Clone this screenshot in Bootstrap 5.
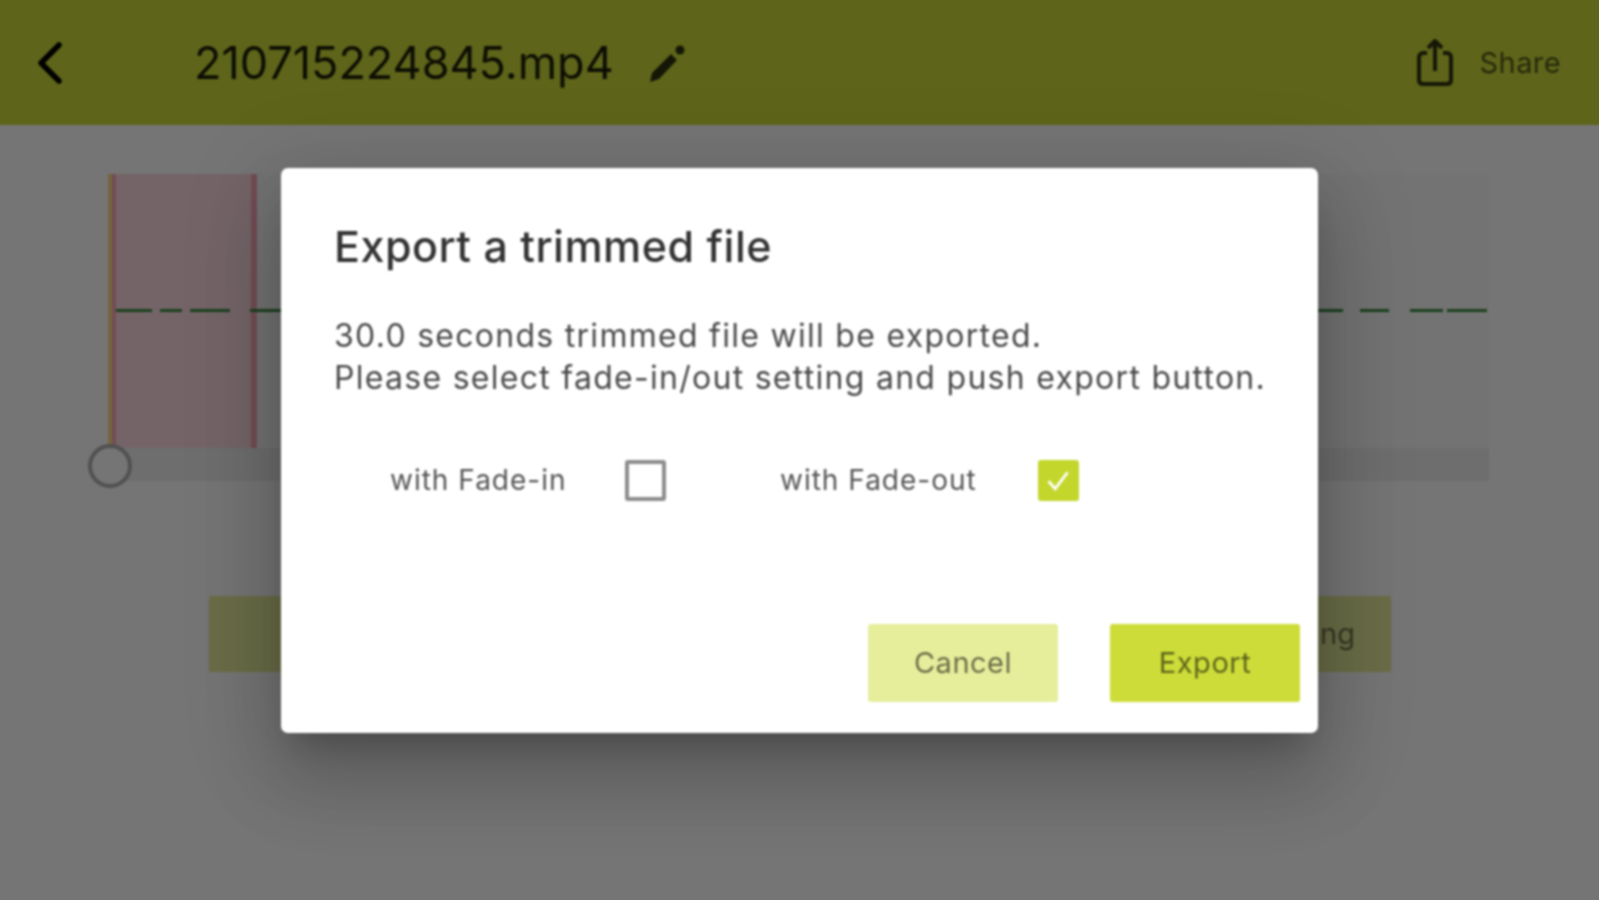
<!DOCTYPE html>
<html lang="en">
<head>
<meta charset="utf-8">
<title>Export a trimmed file</title>
<link href="https://cdn.jsdelivr.net/npm/bootstrap@5.3.0/dist/css/bootstrap.min.css" rel="stylesheet">
<style>
html{background:linear-gradient(#5e651a 0 125px,#757575 125px)}
body{background:#fff;font-family:Inter,"Liberation Sans",sans-serif;height:900px;overflow:hidden;filter:blur(1px)}
.app-bar{background:#cddc39;height:125px;padding:0}
.app-back{margin-left:38px;width:24px;height:42px}
.app-title{margin:0 0 0 132px;font-size:45px;font-weight:400;color:rgba(0,0,0,.87);line-height:1;letter-spacing:0}
.app-pencil{margin-left:33px;width:42px;height:42px}
.app-share{color:rgba(0,0,0,.6);font-size:29px;letter-spacing:.4px;margin-right:38px;gap:26px}
.trim-box{margin:49px 110px 0 109px;position:relative}
.wave-area{height:274px;background:repeating-linear-gradient(90deg,#fafafa 0 60px,#f8f8f8 60px 61px);position:relative}
.wave-line{position:absolute;left:0;top:135px;width:100%;height:3px;display:block;z-index:1}
.trim-range{position:absolute;left:0;top:0;width:148px;height:274px;background:#fcd9e2;border-right:6px solid #f9a8b8;border-left:7px solid #f9a8b8}
.trim-start{position:absolute;left:-1px;top:0;width:4px;height:274px;background:#ffdd88}
.seek-strip{height:33px;background:#f0f0f0}
.seek-knob{position:absolute;left:-21px;top:270px;width:44px;height:44px;border:4px solid #b0b0b0;border-radius:50%;background:#fff}
.back-actions{margin:115px 208px 0 209px}
.back-btn{width:500px;height:76px;background:#e6ee9c;border:0;border-radius:2px;font-size:29px;color:rgba(0,0,0,.5);text-align:right;padding-right:36px}
.modal-backdrop.show{opacity:.54;background:#000}
.export-dialog{max-width:1037px;margin:168px auto 0}
.export-dialog .modal-content{height:565px;border:0;border-radius:7px;box-shadow:0 48px 76px 6px rgba(0,0,0,.14),0 18px 92px 16px rgba(0,0,0,.12),0 22px 30px -14px rgba(0,0,0,.2)}
.export-head{padding:55px 0 0 53px;border:0;display:block}
.export-head h2{font-size:43px;font-weight:500;letter-spacing:.5px;line-height:46px;margin:0;color:#333}
.export-text{margin:46px 0 0 53px;font-size:32px;letter-spacing:1.28px;line-height:42px;color:#4a4a4a;white-space:nowrap}
.fade-row{margin:60px 0 0 109px;font-size:28px;letter-spacing:1px;color:#555;height:42px}
.fade-row label{white-space:nowrap}
.label-in{width:175px}
.label-out{width:198px}
.fade-row .form-check-input{width:41px;height:41px;margin:0 0 0 60px;border:4px solid #8c8c8c;border-radius:3px;flex:none}
.fade-row .form-check-input:checked{background-color:#c3d62c;border-color:#c3d62c;background-size:100%;background-image:url("data:image/svg+xml,%3csvg xmlns='http://www.w3.org/2000/svg' viewBox='0 0 40 40'%3e%3cpath fill='none' stroke='%23fff' stroke-width='3.5' d='M8 21l8 9L31 10'/%3e%3c/svg%3e")}
.fade-gap{width:114px}
.export-foot{position:absolute;right:18px;bottom:31px;gap:52px;padding:0;border:0}
.export-foot .btn{width:190px;height:78px;margin:0;border:0;border-radius:3px;font-size:29px;letter-spacing:.5px;color:rgba(0,0,0,.55)}
.btn-cancel{background:#e6ee9c}
.btn-export{background:#cddc39}
</style>
</head>
<body>
<nav class="navbar app-bar d-flex flex-nowrap align-items-center justify-content-start">
  <svg class="app-back flex-none" viewBox="0 0 24 42"><path d="M21 3 3 21l18 18" fill="none" stroke="#000" stroke-width="5.5" stroke-linecap="round" stroke-linejoin="round"/></svg>
  <h1 class="app-title">210715224845.mp4</h1>
  <svg class="app-pencil" viewBox="0 0 42 42" fill="#2e330e"><path d="M3 40l2-9L24 12l6 6L12 37z"/><circle cx="33" cy="8" r="4.5"/></svg>
  <div class="app-share d-flex align-items-center ms-auto">
    <svg width="38" height="48" viewBox="0 0 38 48" fill="none" stroke="#2f330f" stroke-width="4"><path d="M11 14H7c-2 0-4 2-4 4v23c0 3 2 4 4 4h24c3 0 4-2 4-4V18c0-2-2-4-4-4h-4"/><path d="M19 32V4"/><path d="M12 9l7-7 7 7" stroke-linejoin="round"/></svg>
    <span>Share</span>
  </div>
</nav>
<main>
  <div class="trim-box">
    <div class="wave-area">
      <svg class="wave-line" viewBox="0 0 1380 3" preserveAspectRatio="none"><path stroke="#3c8c40" stroke-width="3" d="M7 1.5h36M51 1.5h22M81 1.5h40M141 1.5h40M1209 1.5h25M1251 1.5h29M1301 1.5h33M1338 1.5h40"/></svg>
      <div class="trim-range"></div>
      <div class="trim-start"></div>
    </div>
    <div class="seek-strip"></div>
    <div class="seek-knob"></div>
  </div>
  <div class="back-actions d-flex justify-content-between">
    <button class="back-btn" type="button">Cancel</button>
    <button class="back-btn" type="button">Start trimming</button>
  </div>
</main>
<div class="modal-backdrop show"></div>
<div class="modal d-block" tabindex="-1">
  <div class="modal-dialog export-dialog">
    <div class="modal-content">
      <div class="modal-header export-head"><h2 class="modal-title">Export a trimmed file</h2></div>
      <div class="export-text">30.0 seconds trimmed file will be exported.<br>Please select fade-in/out setting and push export button.</div>
      <div class="fade-row d-flex align-items-center">
        <label class="label-in" for="fadeIn">with Fade-in</label><input class="form-check-input" type="checkbox" id="fadeIn">
        <div class="fade-gap"></div>
        <label class="label-out" for="fadeOut">with Fade-out</label><input class="form-check-input" type="checkbox" id="fadeOut" checked>
      </div>
      <div class="modal-footer export-foot d-flex">
        <button class="btn btn-cancel" type="button">Cancel</button>
        <button class="btn btn-export" type="button">Export</button>
      </div>
    </div>
  </div>
</div>
<script src="https://cdn.jsdelivr.net/npm/bootstrap@5.3.0/dist/js/bootstrap.bundle.min.js"></script>
</body>
</html>
